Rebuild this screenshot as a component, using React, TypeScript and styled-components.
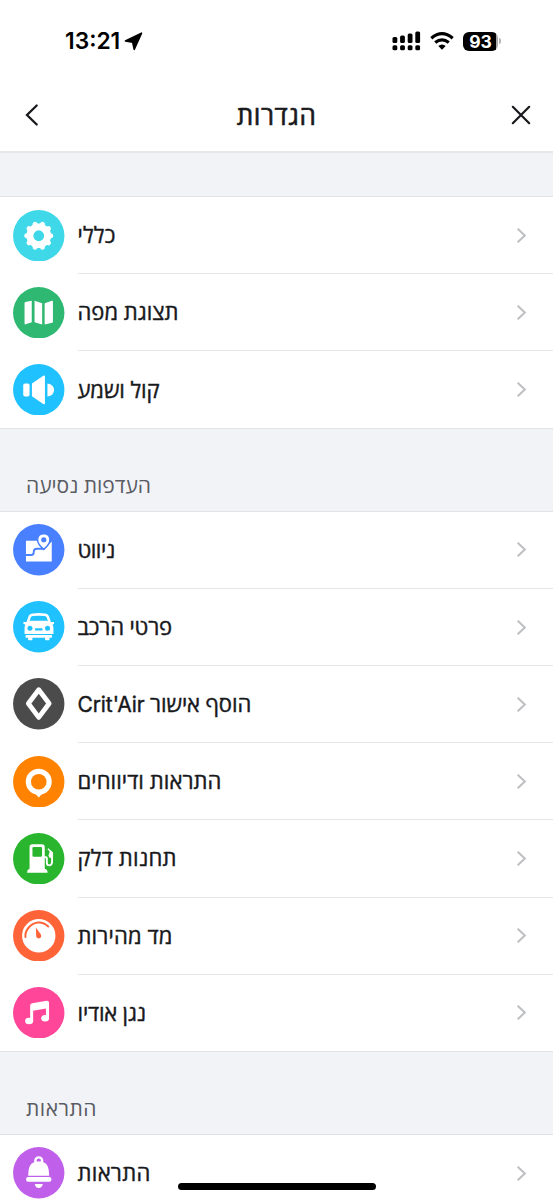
import React from "react";
import styled, { createGlobalStyle } from "styled-components";

const Global = createGlobalStyle`
  * { box-sizing: border-box; }
  html, body { margin: 0; background: #fff; }
  body { height: 1200px; overflow: hidden; }
`;

const Screen = styled.div`
  position: relative;
  width: 553px;
  height: 1200px;
  overflow: hidden;
  background: #fff;
  color: #18191c;
  font-family: "Open Sans", "Liberation Sans", sans-serif;
`;

const StatusBar = styled.div`
  display: flex;
  justify-content: space-between;
  align-items: center;
  height: 80px;
  padding: 2px 52px 0 65px;
  color: #000;
`;

const Clock = styled.div`
  display: flex;
  align-items: center;
  gap: 4px;
  font: 600 22.8px/28px Inter, sans-serif;
  letter-spacing: 0;
`;

const StatusIcons = styled.div`
  display: flex;
  align-items: center;
  gap: 9px;
`;

const Battery = styled.div`
  display: flex;
  align-items: center;
  gap: 1px;
`;

const BatteryLevel = styled.div`
  width: 35px;
  height: 19px;
  border-radius: 6px;
  background: linear-gradient(to right, #000 33px, #a9a9a9 33px);
  color: #fff;
  font: 700 17.5px/19px Inter, sans-serif;
  text-align: center;
`;

const BatteryTip = styled.div`
  width: 2px;
  height: 6px;
  border-radius: 0 2px 2px 0;
  background: #b5b5b5;
`;

const Header = styled.header`
  display: flex;
  justify-content: space-between;
  align-items: center;
  height: 73px;
  padding: 0 22px 2px 24px;
  border-bottom: 2px solid #e6e7ea;
`;

const Title = styled.h1`
  margin: 0;
  padding-left: 2px;
  font-size: 26px;
  font-weight: 400;
  -webkit-text-stroke: 0.6px currentColor;
  line-height: 34px;
`;

const Text = styled.span<{ $spacing?: number }>`
  letter-spacing: ${(p) => p.$spacing ?? 0}px;
  white-space: nowrap;
`;

const Latin = styled.span`
  font-family: Inter, sans-serif;
  font-size: 21px;
  letter-spacing: -0.1px;
`;

const Band = styled.div<{ $height: number; $line?: boolean }>`
  display: flex;
  align-items: flex-end;
  height: ${(p) => p.$height}px;
  padding: 0 26px 11px;
  background: #f2f3f7;
  border-top: ${(p) => (p.$line ? "1px solid #e2e3e6" : "0")};
  color: #5a5c63;
  font-size: 21px;
  line-height: 30px;
`;

const Row = styled.div`
  display: flex;
  height: 77.15px;
  padding-left: 13px;
  gap: 13px;
  align-items: center;
  &:first-child { border-top: 1px solid #e2e3e6; }
`;

const RowBody = styled.div`
  flex: 1;
  align-self: stretch;
  display: flex;
  align-items: center;
  justify-content: space-between;
  padding-right: 26px;
  border-top: 1px solid #e6e6e9;
  font-size: 22px;
  ${Row}:first-child & { border-top: 0; }
`;

const Label = styled(Text)`
  padding-bottom: 2px;
  -webkit-text-stroke: 0.4px currentColor;
`;

const Disc = styled.svg`
  display: block;
  width: 51.5px;
  height: 51.5px;
  flex: none;
  ${Row}:not(:first-child) & { margin-top: 0.8px; }
`;

const HomeIndicator = styled.div`
  position: absolute;
  left: 178px;
  top: 1183px;
  width: 198px;
  height: 7px;
  border-radius: 4px;
  background: #000;
`;

type IconName = "gear" | "map" | "sound" | "route" | "car" | "diamond" | "pin" | "fuel" | "gauge" | "music" | "bell";

const colors: Record<IconName, string> = {
  gear: "#3fd8e8",
  map: "#2eb872",
  sound: "#1fc1ff",
  route: "#4880ff",
  car: "#1fc1ff",
  diamond: "#4b4b4b",
  pin: "#ff8200",
  fuel: "#2ab52f",
  gauge: "#ff6338",
  music: "#ff4699",
  bell: "#c060ea",
};

const teeth = Array.from({ length: 10 }, (_, i) => i * 36);

function Glyph({ name }: { name: IconName }) {
  const bg = colors[name];
  switch (name) {
    case "gear":
      return (
        <>
          <circle r="12.300" />
          {teeth.map((a) => (
            <path key={a} d="M11-3.200 13.300-2q1.200 0 1.200 2t-1.200 2L11 3.200z" transform={`rotate(${a})`} />
          ))}
          <circle r="5.400" fill={bg} />
        </>
      );
    case "map":
      return (
        <path d="M-14.200-9.600q0-.8.800-1.100l6.400-1.400V9.400l-6.200 2.200q-1 .2-1-.8zM-4.200-12.100l7.600 2.700V11.700l-7.600-2.300zM5.900-9.400l7.300-2.600q1-.2 1 .8V9q0 .8-.8 1.100l-7.500 1.600z" />
      );
    case "sound":
      return (
        <>
          <rect x="-15.500" y="-6.300" width="6.300" height="13" rx="1.800" />
          <path d="M-6.800-6.200 4.500-14q1.700-1 1.700.8v26.600q0 1.800-1.700.8L-6.800 6.600z" />
          <path d="M8.700-6.300q6.600 1 6.600 6.500t-6.600 6.500z" />
        </>
      );
    case "route":
      return (
        <>
          <path d="M-12.800-9H-1L5 0l8-8.300V11.700h-25.800z" />
          <path d="M-13 5.300h5.500q2.500 0 2.500-3V2q0-3 3-3H6" fill="none" stroke={bg} strokeWidth="1.900" />
          <path
            d="M5-16c3.700 0 6.200 2.600 6.200 6.100C11.200-5.400 5-.3 5-.3S-1.200-5.400-1.200-9.900C-1.200-13.400 1.300-16 5-16z"
            stroke={bg}
            strokeWidth="1.500"
          />
          <circle cx="5" cy="-10" r="2.600" fill={bg} />
        </>
      );
    case "car":
      return (
        <>
          <path
            d="M-11.200-3.500-9.300-9.400Q-8.500-11.700-6-12q6-.8 12 0 2.500.3 3.300 2.600L11.200-3.500"
            fill="none"
            stroke="#fff"
            strokeWidth="2.600"
          />
          <path d="M-15.300-4.700h4.500L-8-6H8l2.800 1.300h4.500v2l-1.600.5q1 1.700 1 4V7.200h-28.900V1.800q0-2.300.8-4l-1.900-.5z" />
          <rect x="-13.300" y="8.200" width="26.600" height="2.700" rx="1" />
          <path d="M-10.700 10.500h4.400v2.100q0 1-1 1h-2.400q-1 0-1-1zM6.300 10.500h4.400v2.100q0 1-1 1H7.300q-1 0-1-1z" />
          <circle cx="-8.800" cy="1.500" r="2.500" fill={bg} />
          <circle cx="8.800" cy="1.500" r="2.500" fill={bg} />
          <rect x="-3.800" y="1.400" width="7.600" height="2.300" rx=".6" fill={bg} />
        </>
      );
    case "diamond":
      return (
        <path d="M0-14 10.400-.3 0 13.600-10.400-.3z" fill="none" stroke="#fff" strokeWidth="4.800" strokeLinejoin="round" />
      );
    case "pin":
      return (
        <>
          <circle r="13" />
          <path d="M-6 11Q-2.500 12-.8 14.900q.8 1.300 1.600 0Q2.500 12 6 11z" />
          <circle r="7.800" fill={bg} />
        </>
      );
    case "fuel":
      return (
        <>
          <path d="M-9.200 10V-11.600q0-2.800 2.800-2.800h9.600Q6-14.400 6-11.600V10q2.800.6 2.800 3.500 0 .6-.6.600h-19.200q-.7 0-.7-.6 0-2.900 2.500-3.500z" />
          <rect x="-6.300" y="-11.700" width="9.600" height="9.700" rx="1.300" fill={bg} />
          <path d="M5.500-1.500h1.600q1 0 1 1v4.200Q8.100 6.600 10.500 6.600t2.800-3V-4" fill="none" stroke="#fff" strokeWidth="1.900" />
          <path d="M8.600-9.600l1-1 4.200 3.800q.5.500.5 1.300V-.6h-2q-2.600-.6-2.600-3l1-2.300.1-1.700z" />
        </>
      );
    case "gauge":
      return (
        <>
          <circle r="16.700" />
          <path
            d="M-13.300 1.200C-14-5-8.500-12.300-1-13.300q6-.5 10.500 4"
            fill="none"
            stroke={bg}
            strokeWidth="2"
            strokeLinecap="round"
          />
          <path d="M-2.900-8.300 2.200-1.200Q3.300 2.500 0 2.700-3 2.400-2.600-1z" fill={bg} />
        </>
      );
    case "music":
      return (
        <>
          <path d="M-8.600-6.900q0-2.100 2-2.500L8-12q2.300-.3 2.300 1.900V5.500H7.200V-4.200L-5.600-1.900V8.500h-3z" />
          <ellipse cx="-9.600" cy="8.300" rx="4" ry="3.300" />
          <ellipse cx="6.400" cy="5.500" rx="3.900" ry="3.300" />
        </>
      );
    case "bell":
      return (
        <>
          <circle cy="-12" r="3.400" fill="none" stroke="#fff" strokeWidth="2.400" />
          <path d="M-10.500 3C-10-3-10.500-11.300 0-11.300S10-3 10.500 3z" />
          <rect x="-12.700" y="4.200" width="25.400" height="4.800" rx="2.200" />
          <path d="M-4 11.300h8q-.8 4-4 4t-4-4z" />
        </>
      );
  }
}

function IconDisc({ name }: { name: IconName }) {
  return (
    <Disc viewBox="-25.750 -25.750 51.500 51.500" fill="#fff">
      <circle r="25.700" fill={colors[name]} />
      <Glyph name={name} />
    </Disc>
  );
}

interface Item {
  icon: IconName;
  label: React.ReactNode;
  spacing?: number;
}

function Items({ items }: { items: Item[] }) {
  return (
    <section>
      {items.map((item) => (
        <Row key={item.icon}>
          <IconDisc name={item.icon} />
          <RowBody>
            <Label dir="rtl" $spacing={item.spacing}>
              {item.label}
            </Label>
            <svg width="11" height="17" viewBox="0 0 11 17" fill="none" stroke="#bfc0c3" strokeWidth="2.100">
              <path d="M1.700 1.700 8.800 8.500l-7.100 6.800" />
            </svg>
          </RowBody>
        </Row>
      ))}
    </section>
  );
}

const general: Item[] = [
  { icon: "gear", label: "כללי", spacing: 0.2 },
  { icon: "map", label: "תצוגת מפה" },
  { icon: "sound", label: "קול ושמע", spacing: -0.1 },
];

const driving: Item[] = [
  { icon: "route", label: "ניווט", spacing: -0.5 },
  { icon: "car", label: "פרטי הרכב", spacing: -0.15 },
  {
    icon: "diamond",
    label: (
      <>
        הוסף אישור <Latin>Crit'Air</Latin>
      </>
    ),
    spacing: -0.1,
  },
  { icon: "pin", label: "התראות ודיווחים", spacing: 0.07 },
  { icon: "fuel", label: "תחנות דלק", spacing: 0.2 },
  { icon: "gauge", label: "מד מהירות", spacing: 0.15 },
  { icon: "music", label: "נגן אודיו", spacing: -0.18 },
];

const alerts: Item[] = [{ icon: "bell", label: "התראות", spacing: 0.3 }];

const bars = [6, 7.5, 9.5, 11.5];

export default function App() {
  return (
    <Screen>
      <Global />
      <StatusBar>
        <Clock>
          13:21
          <svg width="19" height="19" viewBox="0 0 19 19" stroke="#000" strokeWidth="1.600" strokeLinejoin="round">
            <path d="M17.500 1.200 10.200 17.300 8.700 10.300 1.400 9z" />
          </svg>
        </Clock>
        <StatusIcons>
          <svg width="29" height="20" viewBox="0 0 29 20">
            {bars.map((h, i) => (
              <React.Fragment key={h}>
                <rect x={0.5 + i * 7.6} y={12 - h} width="4.800" height={h} rx="1.500" />
                <rect x={0.5 + i * 7.6} y="14.200" width="4.800" height="5" rx="1.500" />
              </React.Fragment>
            ))}
          </svg>
          <svg width="24" height="18" viewBox="0 0 24 18" fill="none" stroke="#000" strokeWidth="3.200">
            <path d="M1.300 6.200q10.700-9 21.400 0M5.200 10.600q6.800-5.400 13.600 0" />
            <path d="M12 17.700 8.300 14q3.700-3 7.400 0z" fill="#000" stroke="none" />
          </svg>
          <Battery>
            <BatteryLevel>93</BatteryLevel>
            <BatteryTip />
          </Battery>
        </StatusIcons>
      </StatusBar>
      <Header>
        <svg width="16" height="24" viewBox="0 0 16 24" fill="none" stroke="#18191c" strokeWidth="2.300" strokeLinecap="round">
          <path d="M12.700 2.500 3 12l9.700 9.500" />
        </svg>
        <Title>
          <Text $spacing={0.6}>הגדרות</Text>
        </Title>
        <svg width="20" height="20" viewBox="0 0 20 20" stroke="#18191c" strokeWidth="2.200" strokeLinecap="round">
          <path d="m1.800 1.800 16.400 16.400M18.200 1.800 1.800 18.200" />
        </svg>
      </Header>
      <Band $height={43.2} />
      <Items items={general} />
      <Band $height={83.25} $line>
        <Text>העדפות נסיעה</Text>
      </Band>
      <Items items={driving} />
      <Band $height={83.25} $line>
        <Text $spacing={0.5}>התראות</Text>
      </Band>
      <Items items={alerts} />
      <HomeIndicator />
    </Screen>
  );
}
